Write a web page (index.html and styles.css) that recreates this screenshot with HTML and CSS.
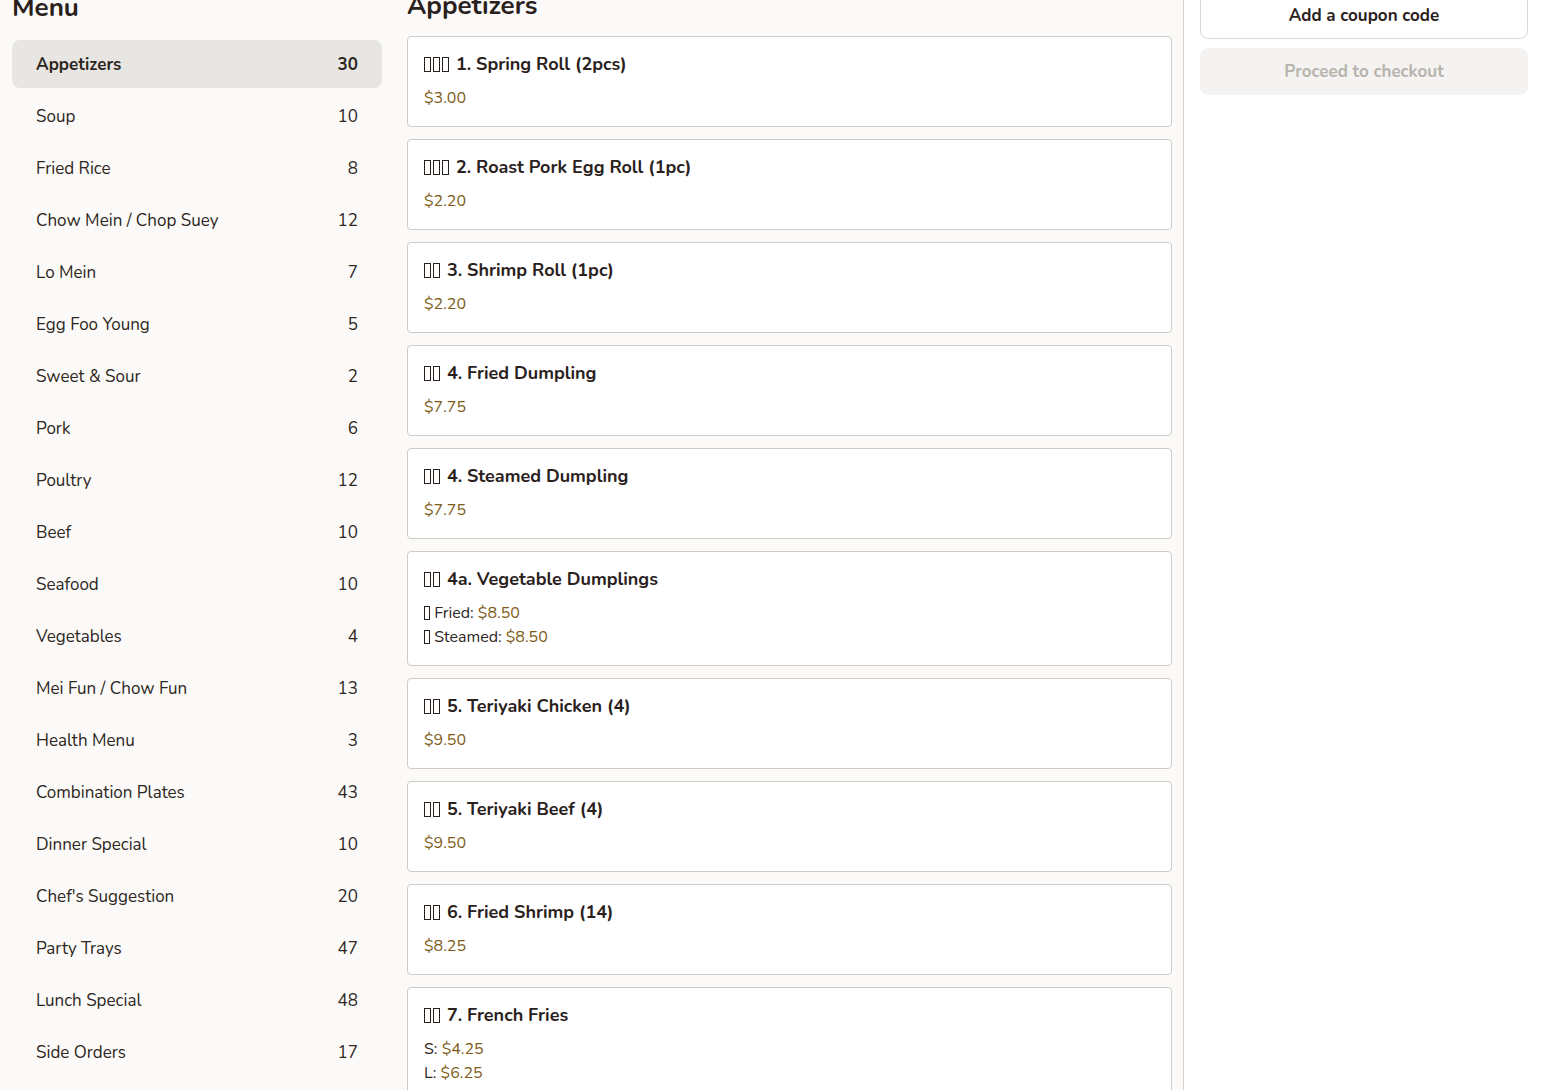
FILE: index.html
```html
<!DOCTYPE html>
<html lang="en">
<head>
<meta charset="utf-8">
<title>Menu</title>
<link rel="stylesheet" href="styles.css">
</head>
<body>
<div class="page">
  <aside class="sidebar">
    <h2 class="heading">Menu</h2>
    <ul class="cats">
      <li class="cat active"><span>Appetizers</span><span>30</span></li>
      <li class="cat"><span>Soup</span><span>10</span></li>
      <li class="cat"><span>Fried Rice</span><span>8</span></li>
      <li class="cat"><span>Chow Mein / Chop Suey</span><span>12</span></li>
      <li class="cat"><span>Lo Mein</span><span>7</span></li>
      <li class="cat"><span>Egg Foo Young</span><span>5</span></li>
      <li class="cat"><span>Sweet &amp; Sour</span><span>2</span></li>
      <li class="cat"><span>Pork</span><span>6</span></li>
      <li class="cat"><span>Poultry</span><span>12</span></li>
      <li class="cat"><span>Beef</span><span>10</span></li>
      <li class="cat"><span>Seafood</span><span>10</span></li>
      <li class="cat"><span>Vegetables</span><span>4</span></li>
      <li class="cat"><span>Mei Fun / Chow Fun</span><span>13</span></li>
      <li class="cat"><span>Health Menu</span><span>3</span></li>
      <li class="cat"><span>Combination Plates</span><span>43</span></li>
      <li class="cat"><span>Dinner Special</span><span>10</span></li>
      <li class="cat"><span>Chef's Suggestion</span><span>20</span></li>
      <li class="cat"><span>Party Trays</span><span>47</span></li>
      <li class="cat"><span>Lunch Special</span><span>48</span></li>
      <li class="cat"><span>Side Orders</span><span>17</span></li>
    </ul>
  </aside>
  <main class="content">
    <h2 class="heading">Appetizers</h2>
    <div class="items">
      <div class="card">
        <div class="title"><span class="tofu"></span><span class="tofu"></span><span class="tofu"></span> 1. Spring Roll (2pcs)</div>
        <div class="price">$3.00</div>
      </div>
      <div class="card">
        <div class="title"><span class="tofu"></span><span class="tofu"></span><span class="tofu"></span> 2. Roast Pork Egg Roll (1pc)</div>
        <div class="price">$2.20</div>
      </div>
      <div class="card">
        <div class="title"><span class="tofu"></span><span class="tofu"></span> 3. Shrimp Roll (1pc)</div>
        <div class="price">$2.20</div>
      </div>
      <div class="card">
        <div class="title"><span class="tofu"></span><span class="tofu"></span> 4. Fried Dumpling</div>
        <div class="price">$7.75</div>
      </div>
      <div class="card">
        <div class="title"><span class="tofu"></span><span class="tofu"></span> 4. Steamed Dumpling</div>
        <div class="price">$7.75</div>
      </div>
      <div class="card">
        <div class="title"><span class="tofu"></span><span class="tofu"></span> 4a. Vegetable Dumplings</div>
        <div class="opts">
          <div class="opt"><span class="tofu sm"></span> Fried: <span class="amt">$8.50</span></div>
          <div class="opt"><span class="tofu sm"></span> Steamed: <span class="amt">$8.50</span></div>
        </div>
      </div>
      <div class="card">
        <div class="title"><span class="tofu"></span><span class="tofu"></span> 5. Teriyaki Chicken (4)</div>
        <div class="price">$9.50</div>
      </div>
      <div class="card">
        <div class="title"><span class="tofu"></span><span class="tofu"></span> 5. Teriyaki Beef (4)</div>
        <div class="price">$9.50</div>
      </div>
      <div class="card">
        <div class="title"><span class="tofu"></span><span class="tofu"></span> 6. Fried Shrimp (14)</div>
        <div class="price">$8.25</div>
      </div>
      <div class="card">
        <div class="title"><span class="tofu"></span><span class="tofu"></span> 7. French Fries</div>
        <div class="opts">
          <div class="opt">S: <span class="amt">$4.25</span></div>
          <div class="opt">L: <span class="amt">$6.25</span></div>
        </div>
      </div>
    </div>
  </main>
  <section class="cart">
    <button class="btn coupon">Add a coupon code</button>
    <button class="btn checkout" disabled>Proceed to checkout</button>
  </section>
</div>
</body>
</html>
```
FILE: styles.css
```css
html, body {
  margin: 0;
  padding: 0;
}
body {
  background: #fbfaf8;
  font-family: "Nunito", "Lato", "Noto Sans", sans-serif;
  color: #2a211c;
  height: 1090px;
  overflow: hidden;
}
.page {
  display: flex;
  align-items: stretch;
  min-height: 1090px;
}
.sidebar {
  width: 370px;
  margin-left: 12px;
  flex: none;
}
.heading {
  font-size: 26px;
  font-weight: 700;
  line-height: 32px;
  margin: -8px 0 16px;
  color: #2a211c;
}
.cats {
  list-style: none;
  margin: 0;
  padding: 0;
  display: flex;
  flex-direction: column;
  gap: 4px;
}
.cat {
  height: 48px;
  padding: 0 24px;
  display: flex;
  align-items: center;
  justify-content: space-between;
  font-size: 17px;
  border-radius: 8px;
  color: #2d2621;
}
.cat.active {
  background: #e8e6e3;
  font-weight: 700;
}
.content {
  width: 765px;
  margin-left: 25px;
  flex: none;
}
.content .heading {
  margin: -10px 0 14px;
}
.items {
  display: flex;
  flex-direction: column;
  gap: 12px;
}
.card {
  background: #fff;
  border: 1px solid #cfccc8;
  border-radius: 4px;
  padding: 15px 16px 16px;
}
.title {
  font-size: 18px;
  font-weight: 700;
  line-height: 24px;
  margin-bottom: 10px;
  color: #2a211c;
}
.price, .amt {
  color: #7d5c18;
}
.price {
  font-size: 16px;
  line-height: 24px;
}
.opt {
  font-size: 16px;
  line-height: 24px;
  color: #2d2621;
}
.tofu {
  display: inline-block;
  width: 7px;
  height: 15px;
  border: 1px solid #2a211c;
  box-sizing: border-box;
  margin-right: 2px;
  vertical-align: -2px;
}
.tofu.sm {
  width: 6px;
  height: 14px;
  margin-right: 0;
}
.cart {
  flex: 1;
  margin-left: 11px;
  background: #fff;
  border-left: 1px solid #d6d3cf;
  padding: 0 16px;
  display: flex;
  flex-direction: column;
  gap: 9px;
}
.btn {
  font-family: inherit;
  font-size: 17px;
  font-weight: 700;
  height: 48px;
  border-radius: 8px;
  width: 100%;
}
.coupon {
  margin-top: -9px;
  background: #fff;
  border: 1px solid #dcd9d5;
  color: #2a211c;
}
.checkout {
  background: #f4f3f1;
  border: none;
  color: #b7b3ad;
  height: 47px;
}
```
